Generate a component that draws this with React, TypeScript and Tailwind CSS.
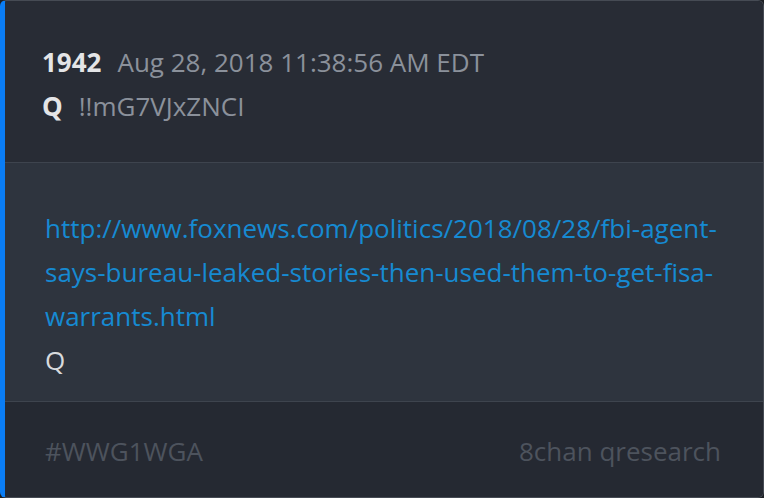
import React from 'react';

const App = () => {
  const link =
    'http://www.foxnews.com/politics/2018/08/28/fbi-agent-says-bureau-leaked-stories-then-used-them-to-get-fisa-warrants.html';

  return (
    <div className="w-[764px] h-[498px] bg-[#1c1f24]" style={{ fontFamily: '"Open Sans", sans-serif' }}>
      <div className="h-[498px] flex flex-col overflow-hidden rounded-md border border-[#464b54] border-l-[5px] border-l-[#0a7df5]">
        {/* Header */}
        <div className="bg-[#282c35] pl-[37px] pr-10 pt-[39px] pb-[34px] border-b border-[#3e444e] text-[26px] leading-[44px]">
          <div className="flex items-baseline gap-4">
            <span className="font-bold text-[#e4e5e7]">1942</span>
            <span className="text-[#8b919b]">Aug 28, 2018 11:38:56 AM EDT</span>
          </div>
          <div className="flex items-baseline gap-4">
            <span className="font-bold text-[#e4e5e7]">Q</span>
            <span className="text-[#8b919b]">!!mG7VJxZNCI</span>
          </div>
        </div>

        {/* Body */}
        <div className="flex-1 min-h-0 bg-[#2e343e] pl-[40px] pr-10 pt-[43px] border-b border-[#3e444e] text-[26px] leading-[44px]">
          <a href="#" className="text-[#168ad2] break-words">
            {link}
          </a>
          <div className="text-[#d8dadd]">Q</div>
        </div>

        {/* Footer */}
        <div className="h-[95px] shrink-0 bg-[#252932] pl-[40px] pr-[42px] pt-[3px] flex items-center justify-between text-[26px] text-[#4d535d]">
          <span>#WWG1WGA</span>
          <span>8chan qresearch</span>
        </div>
      </div>
    </div>
  );
};

export default App;
